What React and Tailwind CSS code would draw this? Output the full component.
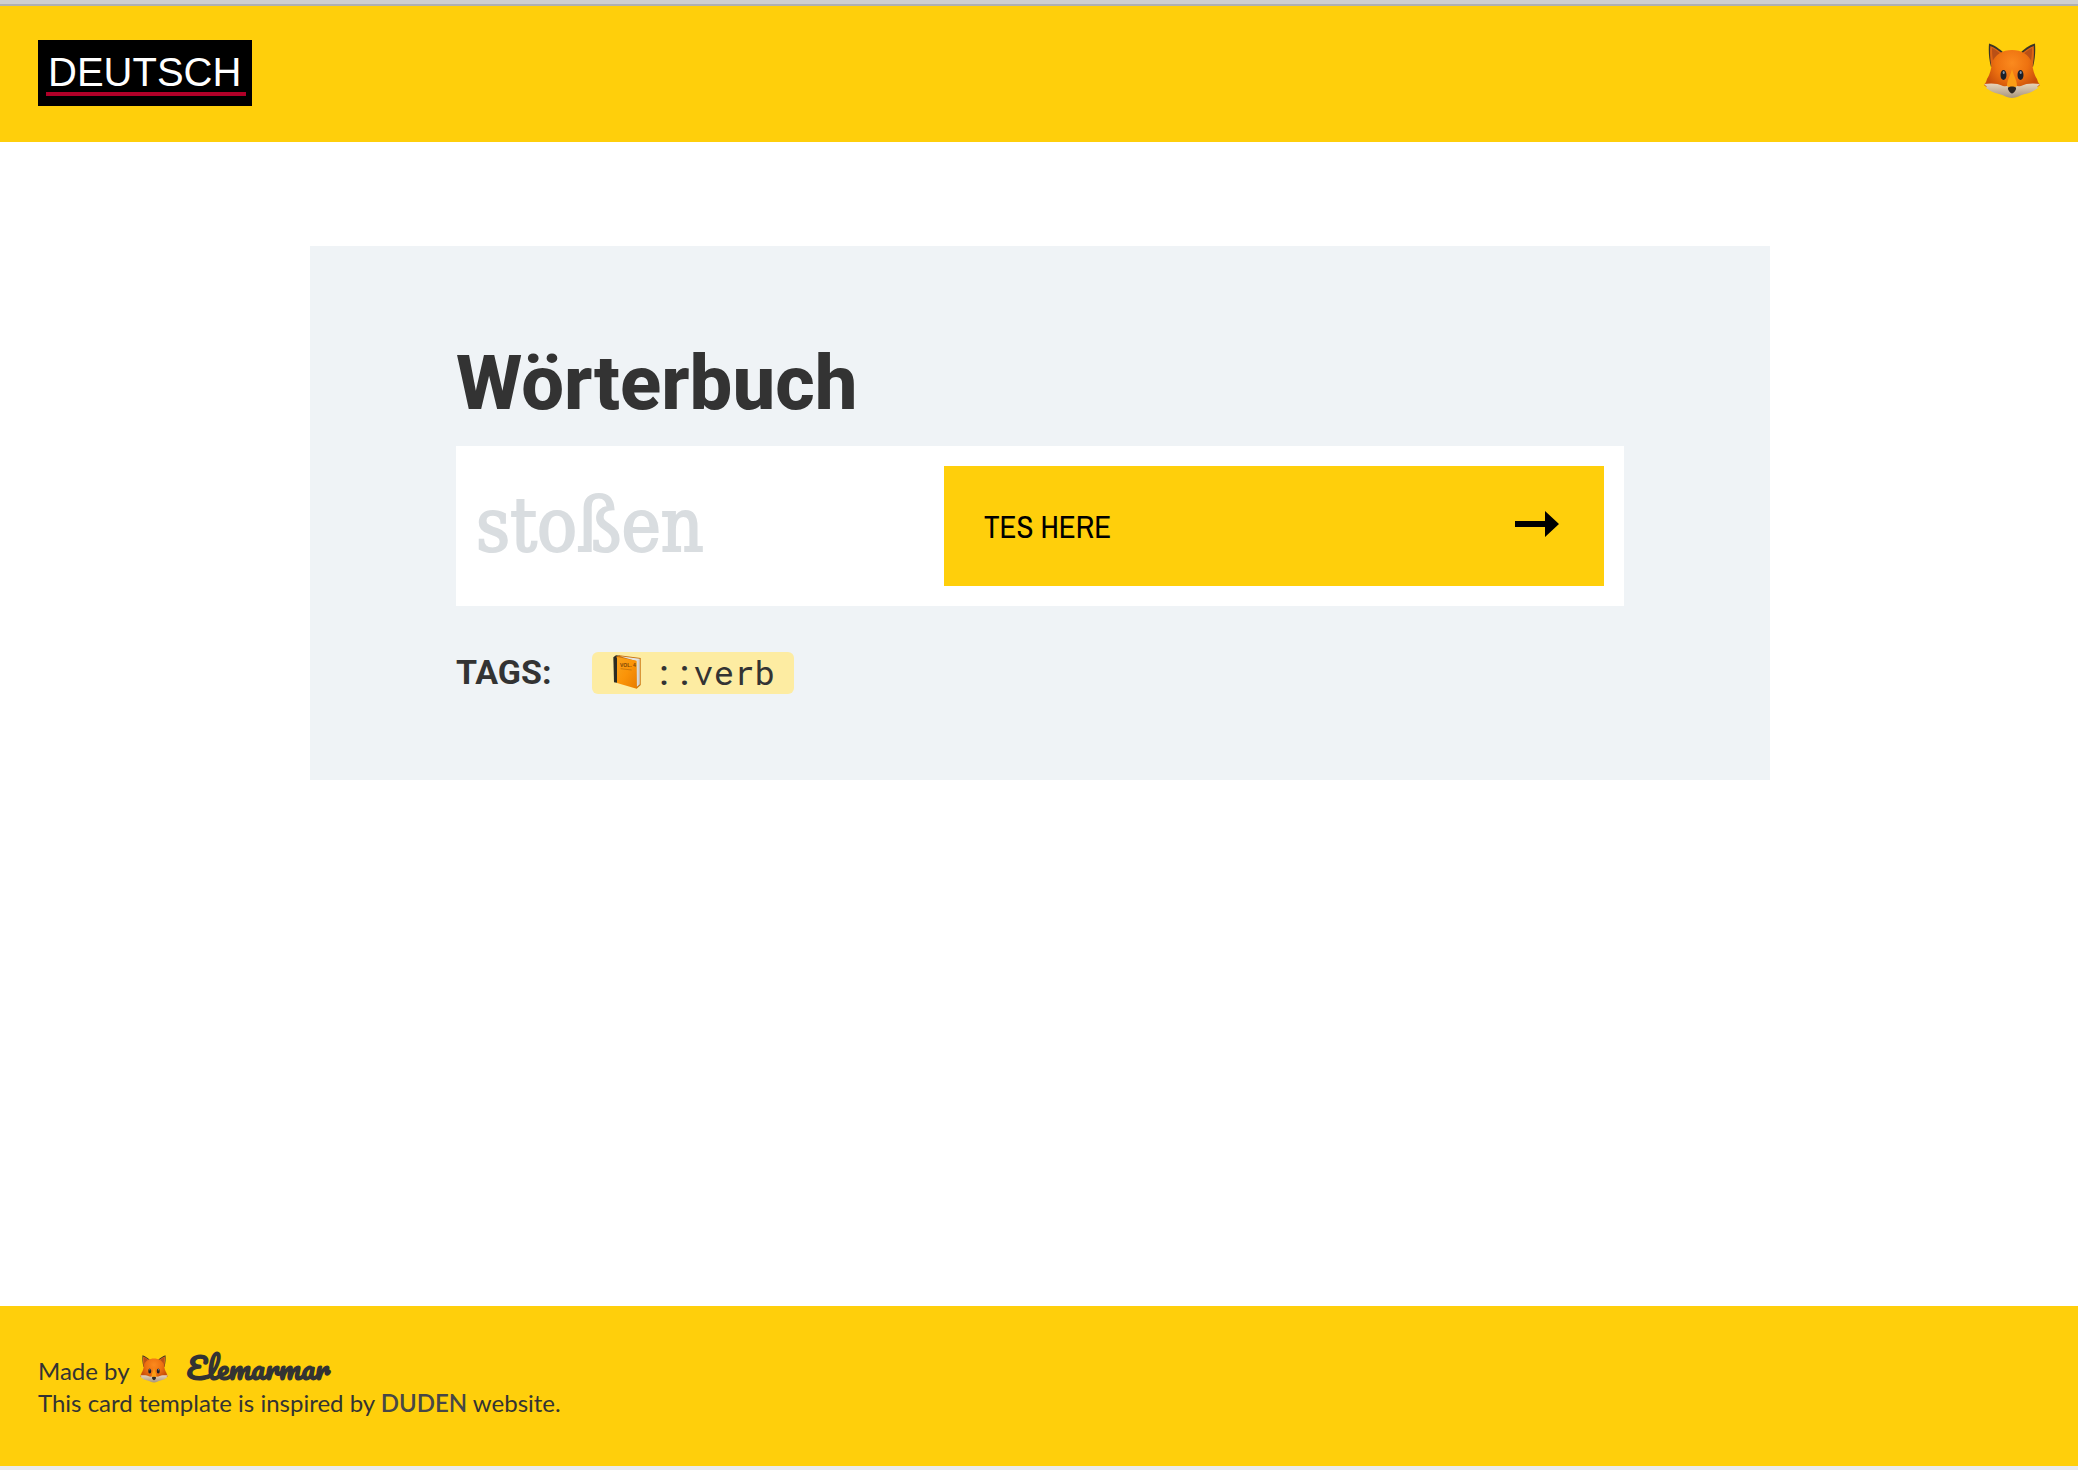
import React from "react";

function Fox({ className, id }) {
  const fur = `${id}-fur`;
  const cheek = `${id}-cheek`;
  return (
    <svg viewBox="0 0 56 56" className={className} role="img" aria-label="Fox">
      <defs>
        <radialGradient id={fur} cx="28" cy="20" r="29" gradientUnits="userSpaceOnUse">
          <stop offset="0" stopColor="#fb8a1e" />
          <stop offset="0.55" stopColor="#ee7210" />
          <stop offset="1" stopColor="#c94e0a" />
        </radialGradient>
        <linearGradient id={cheek} x1="0" y1="38" x2="0" y2="55" gradientUnits="userSpaceOnUse">
          <stop offset="0" stopColor="#f3dfc4" />
          <stop offset="1" stopColor="#a8957c" />
        </linearGradient>
      </defs>
      <path d="M7 24C4.600 15 4.500 7 5 .5 10 2 16 6 20 10L12 20ZM49 24C51.400 15 51.500 7 51 .5 46 2 40 6 36 10L44 20Z" fill="#3b3526" />
      <path d="M7.500 24C6 16 5.800 9 6.300 3 11 4.500 15 8 19 11L13 22ZM48.500 24C50 16 50.200 9 49.700 3 45 4.500 41 8 37 11L43 22Z" fill="#df6514" />
      <path d="M9 18C8 12 8 8 8 5 12 7 15 9 17 12ZM47 18C48 12 48 8 48 5 44 7 41 9 39 12Z" fill="#b95016" />
      <path d="M28 7C37 7 45 11 48 20C49 27 50 31 53 36L54 39 56 42C52 46 41 48 35 49L28 53 21 49C15 48 4 46 0 42L2 39 3 36C6 31 7 27 8 20C11 11 19 7 28 7Z" fill={`url(#${fur})`} />
      <path d="M0 41C6 40 14 40 19 43C23 44 25 42 28 42C31 42 33 44 37 43C42 40 50 40 56 41L53 44 54 45C50 48 46 50 41 51C36 52 33 55 28 55C23 55 20 52 15 51C10 50 6 48 2 45L3 44Z" fill={`url(#${cheek})`} />
      <path d="M28 26C30 34 33 37 33 43L28 46 23 43C23 37 26 34 28 26Z" fill="#fb9d14" />
      <ellipse cx="19.500" cy="32" rx="3" ry="5" fill="#1d2029" />
      <ellipse cx="36.500" cy="32" rx="3" ry="5" fill="#1d2029" />
      <ellipse cx="19.700" cy="29.500" rx="1" ry="1.500" fill="#8795a8" />
      <ellipse cx="36.700" cy="29.500" rx="1" ry="1.500" fill="#8795a8" />
      <path d="M24 44.500C26 43 30 43 32 44.500C32.500 47 30 50 28 50.500C26 50 23.500 47 24 44.500Z" fill="#2b2520" />
    </svg>
  );
}

function Book({ className }) {
  return (
    <svg viewBox="0 0 82 102" className={className} role="img" aria-label="Orange book">
      <defs>
        <linearGradient id="book-cover" x1="0" y1="0" x2="1" y2="1">
          <stop offset="0" stopColor="#f9a31c" />
          <stop offset="0.500" stopColor="#fb9408" />
          <stop offset="1" stopColor="#e87c00" />
        </linearGradient>
      </defs>
      <path d="M0 7 8 1 20 2 14 84 2 82Z" fill="#2b2b22" />
      <path d="M8 5 18 1 82 9V90L70 101Z" fill="#c9700a" />
      <path d="M20 4 79 11V88L70 96 68 18Z" fill="#e3e3e0" />
      <path d="M74 15V92M77 13V90" stroke="#a9a9a6" strokeWidth="1" fill="none" />
      <path d="M11 6 70 17V101L11 84Z" fill="url(#book-cover)" />
      <text x="20" y="35" fontSize="15" fontWeight="700" fontFamily="Liberation Sans, sans-serif" fill="#7d4507">VOL. 4</text>
      <path d="M22 41 55 45" stroke="#b76a0c" strokeWidth="2" />
    </svg>
  );
}

export default function App() {
  return (
    <div className="flex min-h-screen flex-col bg-white font-['Lato',sans-serif] text-[#333333]">
      <header className="mt-1 flex items-center justify-between border-t-2 border-[#b0b0b0] bg-[#ffcf0b] px-[38px] pt-[34px] pb-9 shadow-[0_-4px_0_#cfcfcf]">
        <a href="#" className="bg-black pt-3 pr-1.5 pb-[10px] pl-2 font-['Liberation_Sans',sans-serif] text-[40px] leading-10 text-white">
          <span className="block border-b-4 border-[#b00028] pr-[5px] pl-0.5">DEUTSCH</span>
        </a>
        <Fox id="header-fox" className="mb-1 size-14" />
      </header>

      <main className="flex flex-1 flex-col items-center pt-[104px] pr-10 pb-16 pl-[42px]">
        <section className="w-full max-w-[1460px] bg-[#eff3f6] px-[146px] pt-[92px] pb-[86px]">
          <h1 className="font-['Roboto',sans-serif] text-[76px] leading-[90px] font-extrabold">
            <label htmlFor="word">Wörterbuch</label>
          </h1>
          <div className="mt-[18px] flex bg-white p-5">
            <input
              id="word"
              type="text"
              placeholder="stoßen"
              className="min-w-0 flex-1 pb-0.5 font-['Roboto_Slab','DejaVu_Serif_Condensed','DejaVu_Serif',serif] text-[74px] leading-[90px] outline-none [-webkit-text-stroke:2px_#d9dde0] placeholder:text-[#d9dde0] placeholder:opacity-100"
            />
            <button type="button" className="flex h-[120px] w-[660px] items-center justify-between bg-[#ffcf0b] pr-[45px] pl-10 font-['Archivo_Narrow','Roboto',sans-serif] text-[31px] text-black">
              <span className="pt-0.5">TES HERE</span>
              <svg viewBox="0 0 44 26" className="mb-1 h-[26px] w-11" aria-hidden="true">
                <path d="M0 10H30V0L44 13 30 26V16H0Z" fill="#000" />
              </svg>
            </button>
          </div>
          <div className="mt-[46px] flex items-center gap-10">
            <strong className="pb-0.5 font-['Roboto',sans-serif] text-[34px] leading-10 font-bold">TAGS:</strong>
            <span className="flex items-center gap-3 rounded-md bg-[#fdeca2] pr-[19px] pl-[21px] font-['Roboto_Mono','Liberation_Mono',monospace] text-[34px] leading-[42px]">
              <Book className="mb-0.5 h-[34px] w-7" />
              <span className="pb-0.5 leading-10">::verb</span>
            </span>
          </div>
        </section>
      </main>

      <footer className="border-b-4 border-[#ebebeb] bg-[#ffcf0b] px-[38px] pt-[49px] pb-[47px] text-2xl leading-8">
        <p className="flex h-8 items-center">
          Made by
          <Fox id="footer-fox" className="mr-[19px] mb-1 ml-[10px] size-7" />
          <a href="#" className="pb-1.5 font-['Pacifico','Liberation_Serif',cursive] text-[30px] leading-7 font-bold">Elemarmar</a>
        </p>
        <p>
          This card template is inspired by <a href="#" className="font-semibold text-[#474747]">DUDEN</a> website.
        </p>
      </footer>
    </div>
  );
}
